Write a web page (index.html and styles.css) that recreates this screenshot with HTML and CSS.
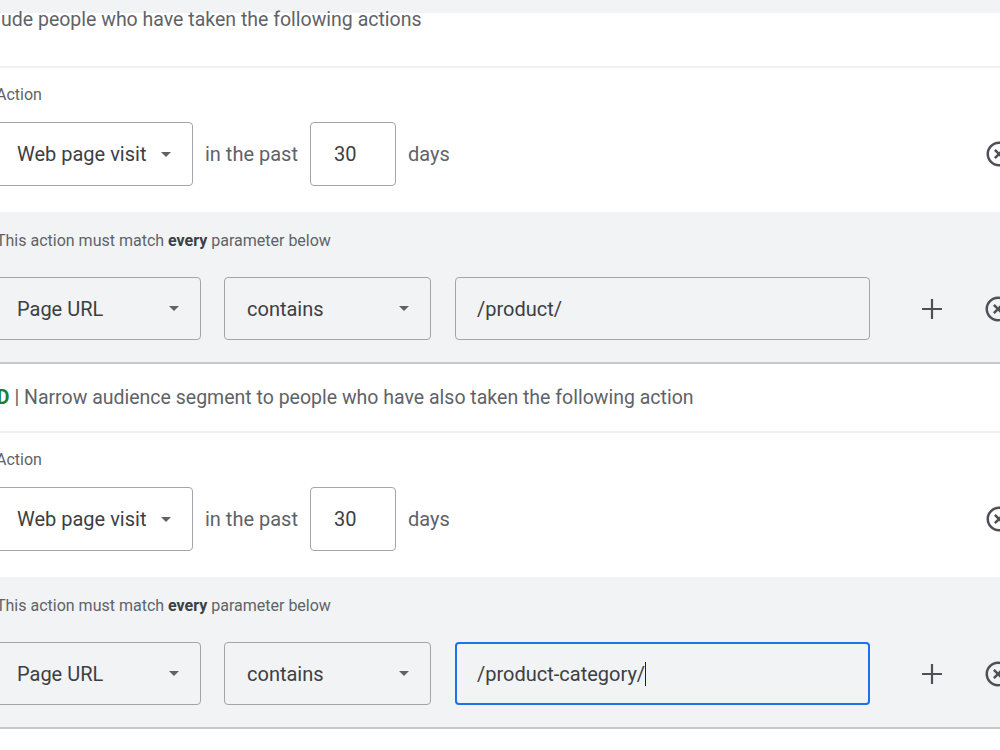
FILE: index.html
```html
<!DOCTYPE html>
<html>
<head>
    <title>Audience segment</title>
    <link rel="stylesheet" href="styles.css">
</head>
<body>
    <div class="top-band"></div>

    <div class="groups">
        <!-- include group -->
        <section class="group">
            <div class="group-head group-head-first">Include people who have taken the following actions</div>

            <div class="action">
                <div class="action-label">Action</div>
                <div class="row action-row">
                    <div class="select select-action"><span>Web page visit</span><i class="caret"></i></div>
                    <span class="row-text">in the past</span>
                    <div class="field field-days">30</div>
                    <span class="row-text">days</span>
                    <svg class="icon-close" viewBox="0 0 24 24"><path d="M14.59 8L12 10.59 9.41 8 8 9.41 10.59 12 8 14.59 9.41 16 12 13.41 14.59 16 16 14.59 13.41 12 16 9.41 14.59 8zM12 2C6.47 2 2 6.47 2 12s4.47 10 10 10 10-4.47 10-10S17.530 2 12 2zm0 18c-4.41 0-8-3.59-8-8s3.59-8 8-8 8 3.59 8 8-3.59 8-8 8z"/></svg>
                </div>
            </div>

            <div class="params">
                <div class="params-label">This action must match <b>every</b> parameter below</div>
                <div class="row param-row">
                    <div class="select select-param"><span>Page URL</span><i class="caret"></i></div>
                    <div class="select select-op"><span>contains</span><i class="caret"></i></div>
                    <div class="field field-value">/product/</div>
                    <svg class="icon-add" viewBox="0 0 30 30"><path d="M15 5v20M5 15h20"/></svg>
                    <svg class="icon-close" viewBox="0 0 24 24"><path d="M14.59 8L12 10.59 9.41 8 8 9.41 10.59 12 8 14.59 9.41 16 12 13.41 14.59 16 16 14.59 13.41 12 16 9.41 14.59 8zM12 2C6.47 2 2 6.47 2 12s4.47 10 10 10 10-4.47 10-10S17.53 2 12 2zm0 18c-4.41 0-8-3.59-8-8s3.59-8 8-8 8 3.59 8 8-3.59 8-8 8z"/></svg>
                </div>
            </div>
        </section>

        <!-- narrow group -->
        <section class="group">
            <div class="group-head"><b class="and">AND</b> | Narrow audience segment to people who have also taken the following action</div>

            <div class="action">
                <div class="action-label">Action</div>
                <div class="row action-row">
                    <div class="select select-action"><span>Web page visit</span><i class="caret"></i></div>
                    <span class="row-text">in the past</span>
                    <div class="field field-days">30</div>
                    <span class="row-text">days</span>
                    <svg class="icon-close" viewBox="0 0 24 24"><path d="M14.59 8L12 10.59 9.41 8 8 9.41 10.59 12 8 14.59 9.41 16 12 13.41 14.59 16 16 14.59 13.41 12 16 9.41 14.59 8zM12 2C6.47 2 2 6.47 2 12s4.47 10 10 10 10-4.47 10-10S17.53 2 12 2zm0 18c-4.41 0-8-3.59-8-8s3.59-8 8-8 8 3.59 8 8-3.59 8-8 8z"/></svg>
                </div>
            </div>

            <div class="params">
                <div class="params-label">This action must match <b>every</b> parameter below</div>
                <div class="row param-row">
                    <div class="select select-param"><span>Page URL</span><i class="caret"></i></div>
                    <div class="select select-op"><span>contains</span><i class="caret"></i></div>
                    <div class="field field-value field-focus">/product-category/<span class="cursor"></span></div>
                    <svg class="icon-add" viewBox="0 0 30 30"><path d="M15 5v20M5 15h20"/></svg>
                    <svg class="icon-close" viewBox="0 0 24 24"><path d="M14.59 8L12 10.59 9.41 8 8 9.41 10.59 12 8 14.59 9.41 16 12 13.41 14.59 16 16 14.59 13.41 12 16 9.41 14.59 8zM12 2C6.47 2 2 6.47 2 12s4.47 10 10 10 10-4.47 10-10S17.53 2 12 2zm0 18c-4.41 0-8-3.59-8-8s3.59-8 8-8 8 3.59 8 8-3.59 8-8 8z"/></svg>
                </div>
            </div>
        </section>
    </div>
</body>
</html>
```

FILE: styles.css
```css
/* page */
html, body {
    overflow: hidden;
}

body {
    margin: 0;
    background: #fff;
    font-family: Roboto, 'Noto Sans', sans-serif;
    color: #3c4043;
}

.top-band {
    height: 13px;
    background: #f1f3f4;
}

/* groups are scrolled a little to the left */
.groups {
    margin-left: -4px;
    width: 1018px;
}

/* group header */
.group-head {
    box-sizing: border-box;
    height: 69px;
    padding-top: 22px;
    margin-left: -26px;
    font-size: 19.5px;
    line-height: 24px;
    color: #5f6368;
    border-bottom: 2px solid #eef0f1;
    white-space: nowrap;
}

.group-head-first {
    height: 55px;
    padding-top: 0;
    line-height: 14px;
}

.and {
    color: #188038;
    font-weight: 700;
}

/* action block */
.action {
    height: 144px;
    box-sizing: border-box;
    padding-top: 17px;
}

.action-label,
.params-label {
    font-size: 16px;
    line-height: 20px;
    color: #5f6368;
    white-space: nowrap;
}

.params-label b {
    color: #3c4043;
    font-weight: 700;
}

.row {
    display: flex;
    align-items: center;
    font-size: 20px;
}

.action-row {
    margin-top: 17px;
    height: 64px;
    gap: 12px;
}

/* params block */
.params {
    height: 152px;
    box-sizing: border-box;
    padding-top: 19px;
    background: #f1f3f4;
    border-bottom: 2px solid #c6c7c9;
}

.param-row {
    margin-top: 26px;
    height: 63px;
    gap: 23px;
}

/* dropdowns and fields */
.select,
.field {
    box-sizing: border-box;
    height: 100%;
    display: flex;
    align-items: center;
    border: 1px solid #a2a5a9;
    border-radius: 4px;
    color: #3c4043;
}

.select {
    padding: 0 21px 0 20px;
    justify-content: space-between;
}

.action-row .select,
.action-row .field {
    background: #fff;
}

.select-action {
    width: 197px;
}

.select-param {
    width: 205px;
}

.select-op {
    width: 207px;
    padding-left: 22px;
}

.caret {
    width: 0;
    height: 0;
    border-left: 5px solid transparent;
    border-right: 5px solid transparent;
    border-top: 5px solid #5f6368;
}

.field-days {
    width: 86px;
    padding-left: 23px;
}

.field-value {
    width: 415px;
    margin-left: 1px;
    padding-left: 21px;
}

.field-focus {
    border: 2px solid #1a73e8;
    padding-left: 20px;
}

.cursor {
    display: inline-block;
    width: 1px;
    height: 24px;
    background: #202124;
}

.row-text {
    color: #5f6368;
}

/* icons */
.icon-add {
    width: 30px;
    height: 30px;
    margin-left: 24px;
    fill: none;
    stroke: #4d5156;
    stroke-width: 2.2;
}

.icon-close {
    width: 30px;
    height: 30px;
    margin-left: auto;
    fill: #4d5156;
}

.param-row .icon-close {
    margin-left: 13px;
}
```
